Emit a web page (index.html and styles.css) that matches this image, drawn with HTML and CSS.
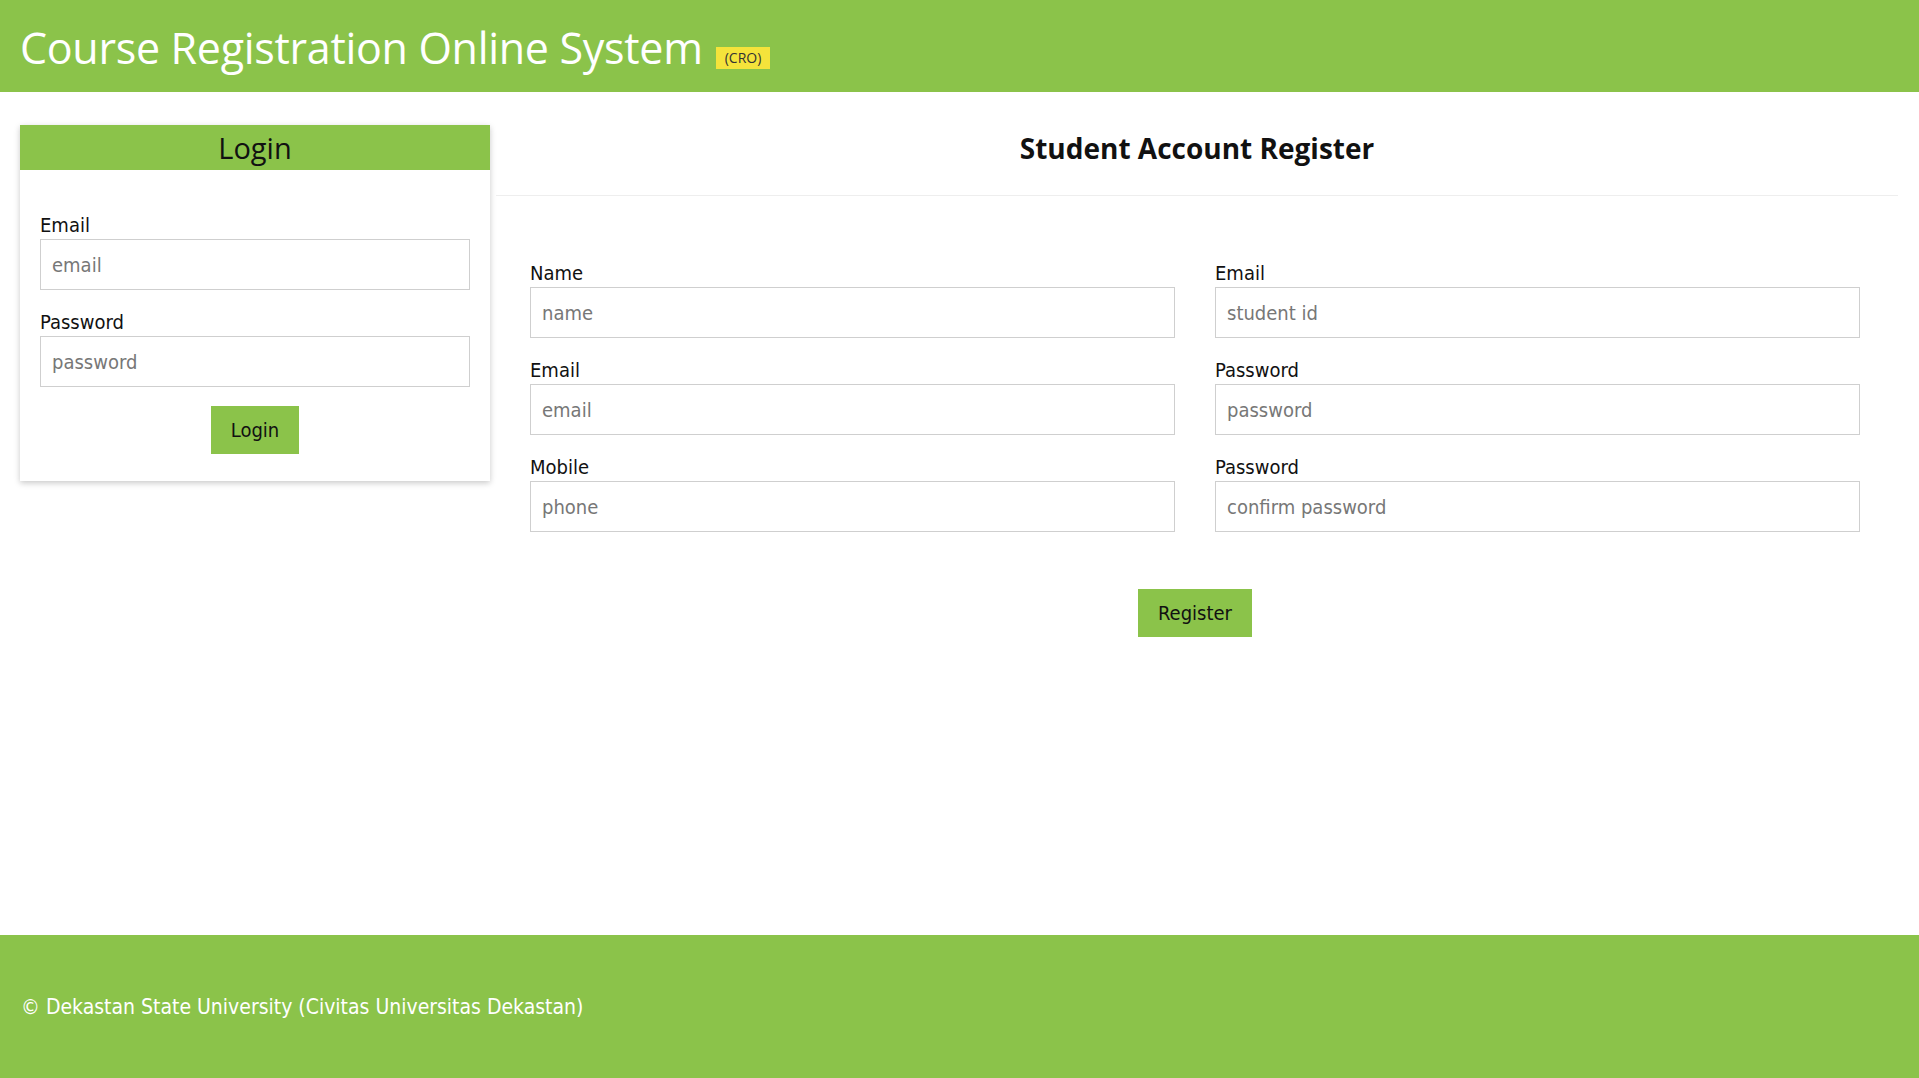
FILE: index.html
```html
<!DOCTYPE html>
<html lang="en">
<head>
<meta charset="utf-8">
<title>Course Registration Online System</title>
<link rel="stylesheet" href="styles.css">
</head>
<body>
<header class="topbar">
  <h1 class="brand">Course Registration Online System</h1>
  <span class="badge">(CRO)</span>
</header>
<main class="content">
  <aside class="login-card">
    <h2 class="login-title">Login</h2>
    <form class="login-body">
      <label class="field">
        <span class="field-label">Email</span>
        <input class="field-input" type="text" placeholder="email">
      </label>
      <label class="field">
        <span class="field-label">Password</span>
        <input class="field-input" type="password" placeholder="password">
      </label>
      <div class="actions">
        <button class="btn" type="button">Login</button>
      </div>
    </form>
  </aside>
  <section class="register">
    <h2 class="register-title">Student Account Register</h2>
    <form class="register-form">
      <div class="grid">
        <label class="field">
          <span class="field-label">Name</span>
          <input class="field-input" type="text" placeholder="name">
        </label>
        <label class="field">
          <span class="field-label">Email</span>
          <input class="field-input" type="text" placeholder="student id">
        </label>
        <label class="field">
          <span class="field-label">Email</span>
          <input class="field-input" type="text" placeholder="email">
        </label>
        <label class="field">
          <span class="field-label">Password</span>
          <input class="field-input" type="password" placeholder="password">
        </label>
        <label class="field">
          <span class="field-label">Mobile</span>
          <input class="field-input" type="text" placeholder="phone">
        </label>
        <label class="field">
          <span class="field-label">Password</span>
          <input class="field-input" type="password" placeholder="confirm password">
        </label>
      </div>
      <div class="actions register-actions">
        <button class="btn btn-wide" type="button">Register</button>
      </div>
    </form>
  </section>
</main>
<footer class="footer">
  <p class="footer-text">© Dekastan State University (Civitas Universitas Dekastan)</p>
</footer>
</body>
</html>
```
FILE: styles.css
```css
* { box-sizing: border-box; }
html, body { height: 100%; }
body {
  margin: 0;
  min-height: 100vh;
  display: flex;
  flex-direction: column;
  background: #fff;
  color: #111;
  font-family: "DejaVu Sans Condensed", "DejaVu Sans", sans-serif;
  font-stretch: condensed;
  font-size: 20px;
}
.topbar {
  height: 92px;
  background: #8bc34a;
  display: flex;
  align-items: center;
  padding: 4px 20px 0 20px;
  gap: 13px;
}
.brand {
  margin: 0;
  font-family: "Open Sans", sans-serif;
  font-stretch: normal;
  font-weight: 400;
  font-size: 43px;
  line-height: 56px;
  color: #fff;
  letter-spacing: -0.3px;
}
.badge {
  margin-top: 20px;
  background: #f5e33b;
  color: #333;
  font-family: "Open Sans", sans-serif;
  font-stretch: normal;
  font-size: 14px;
  padding: 2px 9px;
  line-height: 18px;
}
.content {
  flex: 1;
  display: flex;
  align-items: flex-start;
  gap: 6px;
  padding: 33px 21px 20px 20px;
}
.login-card {
  width: 470px;
  flex: none;
  background: #fff;
  box-shadow: 0 2px 6px rgba(0,0,0,0.22);
}
.login-title {
  margin: 0;
  height: 45px;
  line-height: 45px;
  background: #8bc34a;
  text-align: center;
  font-family: "Open Sans", sans-serif;
  font-stretch: normal;
  font-weight: 400;
  font-size: 29px;
  color: #111;
}
.login-body {
  padding: 41px 20px 27px;
}
.field {
  display: flex;
  flex-direction: column;
}
.field-label {
  font-size: 20px;
  line-height: 28px;
}
.field-input {
  height: 51px;
  border: 1px solid #cfcfcf;
  padding: 0 11px;
  font: inherit;
  font-size: 20px;
  color: #333;
  outline: none;
}
.field-input::placeholder { color: #777; }
.login-body .field + .field { margin-top: 18px; }
.actions {
  display: flex;
  justify-content: center;
}
.login-body .actions { margin-top: 19px; }
.btn {
  background: #8bc34a;
  border: none;
  font: inherit;
  font-size: 20px;
  color: #111;
  height: 48px;
  padding: 0 20px;
  cursor: pointer;
}
.register {
  flex: 1;
}
.register-title {
  margin: 0;
  padding: 6px 0 30px;
  text-align: center;
  font-family: "Open Sans", sans-serif;
  font-stretch: normal;
  font-weight: 700;
  font-size: 28px;
  line-height: 34px;
  border-bottom: 1px solid #eee;
}
.register-form {
  padding: 63px 38px 0 34px;
}
.grid {
  display: grid;
  grid-template-columns: 1fr 1fr;
  column-gap: 40px;
  row-gap: 18px;
}
.register-actions { margin-top: 57px; }
.footer {
  height: 143px;
  background: #8bc34a;
  display: flex;
  align-items: center;
  padding: 0 21px;
}
.footer-text {
  margin: 0;
  color: #fff;
  font-size: 21px;
}
```
